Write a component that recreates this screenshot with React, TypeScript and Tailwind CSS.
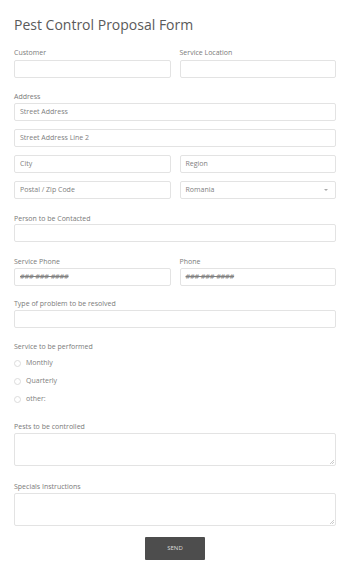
import React from 'react';

const font = { fontFamily: '"Open Sans", "Noto Sans", sans-serif' };

const Label: React.FC<{ text: string; className?: string }> = ({ text, className = '' }) => (
  <div className={`text-[7px] leading-[10px] text-[#7a7a7a] ${className}`}>{text}</div>
);

const Input: React.FC<{ placeholder?: string; italic?: boolean }> = ({ placeholder, italic }) => (
  <div className="h-[18px] w-full border border-[#e3e3e3] rounded-[2px] bg-white flex items-center px-[5px]">
    {placeholder && (
      <span className={`text-[7px] text-[#808080] ${italic ? 'italic line-through' : ''}`}>{placeholder}</span>
    )}
  </div>
);

const TextArea: React.FC = () => (
  <div className="relative h-[33px] w-full border border-[#e3e3e3] rounded-[2px] bg-white">
    <svg className="absolute right-[1px] bottom-[1px]" width="5" height="5" viewBox="0 0 5 5">
      <path d="M5 1 L1 5 M5 3 L3 5" stroke="#aaa" strokeWidth="0.6" />
    </svg>
  </div>
);

const Radio: React.FC<{ text: string }> = ({ text }) => (
  <div className="h-[18px] flex items-center">
    <span className="w-[7px] h-[7px] rounded-full border border-[#dcdcdc] bg-white" />
    <span className="ml-[5px] text-[7px] text-[#808080]">{text}</span>
  </div>
);

export default function App() {
  return (
    <div className="w-[350px] h-[573px] bg-white px-[14px] pt-[15px]" style={font}>
      <h1 className="text-[14px] leading-[20px] text-[#5a5a5a]">Pest Control Proposal Form</h1>

      {/* Customer / Service Location */}
      <div className="grid grid-cols-2 gap-x-[9px] mt-[13px]">
        <div>
          <Label text="Customer" className="mb-[2px]" />
          <Input />
        </div>
        <div>
          <Label text="Service Location" className="mb-[2px]" />
          <Input />
        </div>
      </div>

      {/* Address */}
      <Label text="Address" className="mt-[14px] mb-[1px]" />
      <div className="flex flex-col gap-[8px]">
        <Input placeholder="Street Address" />
        <Input placeholder="Street Address Line 2" />
        <div className="grid grid-cols-2 gap-x-[9px] gap-y-[8px]">
          <Input placeholder="City" />
          <Input placeholder="Region" />
          <Input placeholder="Postal / Zip Code" />
          <div className="relative">
            <Input placeholder="Romania" />
            <svg className="absolute right-[8px] top-[8px]" width="4" height="2" viewBox="0 0 4 2">
              <path d="M0 0 L4 0 L2 2 Z" fill="#aaa" />
            </svg>
          </div>
        </div>
      </div>

      <Label text="Person to be Contacted" className="mt-[15px] mb-[0px]" />
      <Input />

      <div className="grid grid-cols-2 gap-x-[9px] mt-[15px]">
        <div>
          <Label text="Service Phone" className="mb-[1px]" />
          <Input placeholder="### ### ####" italic />
        </div>
        <div>
          <Label text="Phone" className="mb-[1px]" />
          <Input placeholder="### ### ####" italic />
        </div>
      </div>

      <Label text="Type of problem to be resolved" className="mt-[13px] mb-[1px]" />
      <Input />

      <Label text="Service to be performed" className="mt-[14px] mb-[2px]" />
      <div>
        <Radio text="Monthly" />
        <Radio text="Quarterly" />
        <Radio text="other:" />
      </div>

      <Label text="Pests to be controlled" className="mt-[14px] mb-[1px]" />
      <TextArea />

      <Label text="Specials Instructions" className="mt-[16px] mb-[1px]" />
      <TextArea />

      <div className="flex justify-center mt-[11px]">
        <button className="w-[60px] h-[23px] bg-[#4d4d4d] text-[#ddd] text-[6px] rounded-[1px]">SEND</button>
      </div>
    </div>
  );
}
